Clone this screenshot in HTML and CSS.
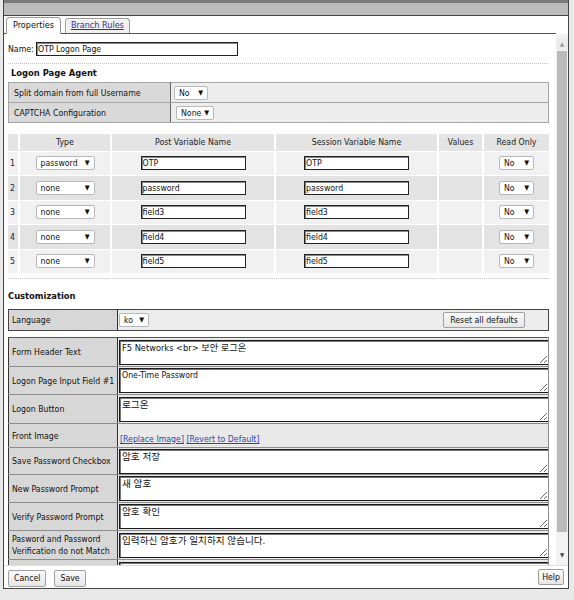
FILE: index.html
```html
<!doctype html>
<html>
<head>
    <meta charset="utf-8">
    <title>OTP Logon Page</title>
    <link rel="stylesheet" href="styles.css">
</head>
<body>

<div class="dialog">
    <div class="titlebar"></div>

    <div class="tabs">
        <span class="tab active">Properties</span>
        <span class="tab"><a href="#">Branch Rules</a></span>
    </div>

    <div class="main">
        <div class="content">

            <div class="name-row">
                <label for="name">Name:</label>
                <input type="text" id="name" class="txt name" value="OTP Logon Page">
            </div>

            <hr class="dots">

            <h2 class="agent-title">Logon Page Agent</h2>
            <table class="agent">
                <tr>
                    <td class="lbl">Split domain from full Username</td>
                    <td><span class="sel w34">No<i>▼</i></span></td>
                </tr>
                <tr>
                    <td class="lbl">CAPTCHA Configuration</td>
                    <td><span class="sel w38 ml2">None<i>▼</i></span></td>
                </tr>
            </table>

            <table class="vars">
                <tr>
                    <th class="c-num"></th>
                    <th class="c-type">Type</th>
                    <th class="c-post">Post Variable Name</th>
                    <th class="c-sess">Session Variable Name</th>
                    <th class="c-val">Values</th>
                    <th class="c-ro">Read Only</th>
                </tr>
                <tr class="odd">
                    <td class="num">1</td>
                    <td><span class="sel w59">password<i>▼</i></span></td>
                    <td><input type="text" class="txt var" value="OTP"></td>
                    <td><input type="text" class="txt var" value="OTP"></td>
                    <td></td>
                    <td><span class="sel w35">No<i>▼</i></span></td>
                </tr>
                <tr class="even">
                    <td class="num">2</td>
                    <td><span class="sel w59">none<i>▼</i></span></td>
                    <td><input type="text" class="txt var" value="password"></td>
                    <td><input type="text" class="txt var" value="password"></td>
                    <td></td>
                    <td><span class="sel w35">No<i>▼</i></span></td>
                </tr>
                <tr class="odd">
                    <td class="num">3</td>
                    <td><span class="sel w59">none<i>▼</i></span></td>
                    <td><input type="text" class="txt var" value="field3"></td>
                    <td><input type="text" class="txt var" value="field3"></td>
                    <td></td>
                    <td><span class="sel w35">No<i>▼</i></span></td>
                </tr>
                <tr class="even">
                    <td class="num">4</td>
                    <td><span class="sel w59">none<i>▼</i></span></td>
                    <td><input type="text" class="txt var" value="field4"></td>
                    <td><input type="text" class="txt var" value="field4"></td>
                    <td></td>
                    <td><span class="sel w35">No<i>▼</i></span></td>
                </tr>
                <tr class="odd last">
                    <td class="num">5</td>
                    <td><span class="sel w59">none<i>▼</i></span></td>
                    <td><input type="text" class="txt var" value="field5"></td>
                    <td><input type="text" class="txt var" value="field5"></td>
                    <td></td>
                    <td><span class="sel w35">No<i>▼</i></span></td>
                </tr>
            </table>

            <hr class="dots dots2">

            <h2 class="custom-title">Customization</h2>

            <table class="lang">
                <tr>
                    <td class="lbl">Language</td>
                    <td>
                        <div class="lang-val">
                            <span class="sel w30">ko<i>▼</i></span>
                            <button class="btn reset">Reset all defaults</button>
                        </div>
                    </td>
                </tr>
            </table>

            <table class="custom">
                <tr class="h29">
                    <td class="lbl">Form Header Text</td>
                    <td><textarea class="mix">F5 Networks &lt;br&gt; 보안 로그온</textarea></td>
                </tr>
                <tr class="h28">
                    <td class="lbl">Logon Page Input Field #1</td>
                    <td><textarea>One-Time Password</textarea></td>
                </tr>
                <tr class="h29">
                    <td class="lbl">Logon Button</td>
                    <td><textarea class="ko">로그온</textarea></td>
                </tr>
                <tr class="h24">
                    <td class="lbl">Front Image</td>
                    <td class="links"><a href="#">[Replace Image]</a> <a href="#">[Revert to Default]</a></td>
                </tr>
                <tr class="h27">
                    <td class="lbl">Save Password Checkbox</td>
                    <td><textarea class="ko">암호 저장</textarea></td>
                </tr>
                <tr class="h28">
                    <td class="lbl">New Password Prompt</td>
                    <td><textarea class="ko">새 암호</textarea></td>
                </tr>
                <tr class="h28">
                    <td class="lbl">Verify Password Prompt</td>
                    <td><textarea class="ko">암호 확인</textarea></td>
                </tr>
                <tr class="h29">
                    <td class="lbl">Pasword and Password Verification do not Match</td>
                    <td><textarea class="ko">입력하신 암호가 일치하지 않습니다.</textarea></td>
                </tr>
                <tr class="h29">
                    <td class="lbl"></td>
                    <td><textarea class="ko">암호 변경 안내</textarea></td>
                </tr>
            </table>

        </div>

        <div class="scrollbar">
            <div class="arrow up">▲</div>
            <div class="thumb"></div>
            <div class="arrow down">▼</div>
        </div>
    </div>

    <div class="footer">
        <button class="btn cancel">Cancel</button>
        <button class="btn save">Save</button>
        <button class="btn help">Help</button>
    </div>
</div>

</body>
</html>
```

FILE: styles.css
```css
* {
    box-sizing: border-box;
}

body {
    margin: 0;
    background: #e9e9e9;
    color: #111;
    font-family: "DejaVu Sans Condensed", "Liberation Sans", "Noto Sans CJK KR", sans-serif;
    font-size: 8.7px;
}

input, textarea, button {
    font-family: "DejaVu Sans Condensed", "Liberation Sans", "Noto Sans CJK KR", sans-serif;
    font-size: 8.7px;
    color: #111;
}

.dialog {
    margin-left: 3px;
    width: 566px;
    height: 589px;
    background: #fff;
    border: 1px solid #444;
    border-top: none;
    display: flex;
    flex-direction: column;
}

.titlebar {
    height: 16px;
    flex: none;
    background: #bcbcbc;
    border-top: 3px solid #7a7a7a;
    border-bottom: 1px solid #444;
}

/* tabs */
.tabs {
    height: 18px;
    flex: none;
    margin-right: 12px;
    padding-left: 2px;
    border-bottom: 1px solid #555;
    display: flex;
    align-items: flex-end;
    gap: 4px;
}

.tab {
    height: 15px;
    padding: 0 5px;
    line-height: 13px;
    font-size: 9px;
    border: 1px solid #999;
    border-bottom: none;
    border-radius: 4px 4px 0 0;
    background: #f0f0f0;
    box-shadow: inset 1px 1px 0 #fff;
}

.tab.active {
    height: 17px;
    margin-bottom: -1px;
    padding: 0 6px;
    line-height: 15px;
    background: #fff;
}

.tab a {
    color: #333399;
}

/* main */
.main {
    height: 531px;
    flex: none;
    display: flex;
}

.content {
    width: 552px;
    padding: 8px 7px 0 4px;
    overflow: hidden;
}

.scrollbar {
    width: 12px;
    padding-top: 4px;
    background: #f3f3f3;
    display: flex;
    flex-direction: column;
}

.arrow {
    height: 12px;
    text-align: center;
    font-size: 6px;
    line-height: 12px;
}

.arrow.up {
    color: #999;
    background: #ececec;
}

.arrow.down {
    margin-top: auto;
    margin-bottom: 4px;
    color: #444;
}

.thumb {
    height: 481px;
    margin: 1px 1px 0 1px;
    background: #bababa;
}

/* name */
.name-row {
    height: 14px;
    display: flex;
    align-items: center;
}

.name-row label {
    width: 28px;
}

.txt {
    height: 14px;
    padding: 0 1px;
    border: 1px solid #222;
    box-shadow: inset 1px 1px 0 #888;
    background: #fff;
    outline: none;
}

.txt.name {
    width: 202px;
}

.txt.var {
    width: 105px;
    vertical-align: middle;
}

hr.dots {
    margin: 7px 0 0 0;
    height: 0;
    border: 0;
    border-top: 1px dotted #c4c4c4;
}

hr.dots2 {
    margin-top: 5px;
}

h2 {
    margin: 0;
    height: 12px;
    line-height: 12px;
    font-size: 9.3px;
    font-weight: bold;
}

.agent-title {
    margin: 3px 0 0 3px;
}

.custom-title {
    margin: 11px 0 0 0;
}

/* fake selects */
.sel {
    display: inline-flex;
    align-items: center;
    justify-content: space-between;
    height: 14px;
    padding: 0 4px 0 4px;
    background: #fff;
    border: 1px solid #b8b8b8;
    border-radius: 2px;
    vertical-align: middle;
}

.sel i {
    font-style: normal;
    font-size: 7px;
}

.w30 { width: 30px; }
.w34 { width: 34px; }
.w35 { width: 35px; }
.w38 { width: 38px; }
.w59 { width: 59px; }
.ml2 { margin-left: 2px; }

table {
    width: 541px;
    border-collapse: collapse;
}

td {
    padding: 0;
}

/* logon page agent */
.agent {
    margin-top: 3px;
}

.agent td {
    height: 20px;
    padding-left: 3px;
    background: #ededed;
    border: 1px solid #a5a5a5;
}

.agent td.lbl {
    width: 162px;
    padding-left: 5px;
    background: #d9d9d9;
    border-right: 1px solid #666;
}

/* variables */
.vars {
    margin-top: 11px;
}

.vars th {
    height: 17px;
    font-weight: normal;
    background: #e4e4e4;
    border-left: 2px solid #fff;
    color: #222;
}

.vars th:first-child,
.vars td:first-child {
    border-left: none;
}

.vars td {
    height: 24px;
    text-align: center;
    border-left: 2px solid #fff;
    border-top: 1px solid #fff;
}

.vars tr.even td {
    height: 25px;
}

.vars tr.odd td {
    background: #f1f1f1;
}

.vars tr.even td {
    background: #e3e3e3;
}

.vars td.num {
    text-align: left;
    padding-left: 2px;
    color: #223;
}

.c-num { width: 11px; }
.c-type { width: 92px; }
.c-post { width: 164px; }
.c-sess { width: 163px; }
.c-val { width: 45px; }
.c-ro { width: 66px; }

/* customization */
.lang,
.custom {
    table-layout: fixed;
}

.lang {
    margin-top: 7px;
}

.lang td {
    height: 21px;
    background: #ececec;
    border: 1px solid #444;
}

.lang td.lbl,
.custom td.lbl {
    width: 109px;
    padding-left: 3px;
    background: #d7d7d7;
    border-right: 1px solid #333;
}

.lang-val {
    display: flex;
    align-items: center;
    justify-content: space-between;
    padding: 0 23px 0 1px;
}

.btn {
    height: 16px;
    padding: 0 5px;
    border: 1px solid #a0a0a0;
    border-radius: 2px;
    background: linear-gradient(#fafafa, #e6e6e6);
    line-height: 14px;
    text-align: center;
    white-space: nowrap;
}

.btn.reset {
    width: 82px;
}

.custom {
    margin-top: 6px;
}

.custom td {
    background: #e9e9e9;
    border: 1px solid #8c8c8c;
    border-left-color: #333;
    border-top-color: #555;
}

.custom td.lbl {
    line-height: 12px;
}

.h24 td { height: 24px; }
.h27 td { height: 27px; }
.h28 td { height: 28px; }
.h29 td { height: 29px; }

.custom textarea {
    display: block;
    width: 430px;
    height: 25px;
    margin: 0 0 0 1px;
    padding: 1px 2px;
    border: 1px solid #1a1a1a;
    box-shadow: inset 1px 1px 0 #777;
    background: #fff;
    line-height: 11px;
    outline: none;
}

.custom textarea.ko {
    font-size: 9.6px;
    line-height: 12px;
}

.custom textarea.mix {
    font-size: 9.2px;
    line-height: 12px;
}

.custom td.links {
    padding: 10px 0 0 2px;
    vertical-align: top;
}

.links a {
    color: #2a48b0;
}

/* footer */
.footer {
    flex: 1;
    padding: 0 4px 0 4px;
    border-top: 1px solid #dedede;
    display: flex;
    align-items: center;
    gap: 8px;
}

.btn.cancel,
.btn.save {
    height: 17px;
    margin-top: 2px;
}

.btn.help {
    margin-left: auto;
    padding: 0 3px;
}
```
